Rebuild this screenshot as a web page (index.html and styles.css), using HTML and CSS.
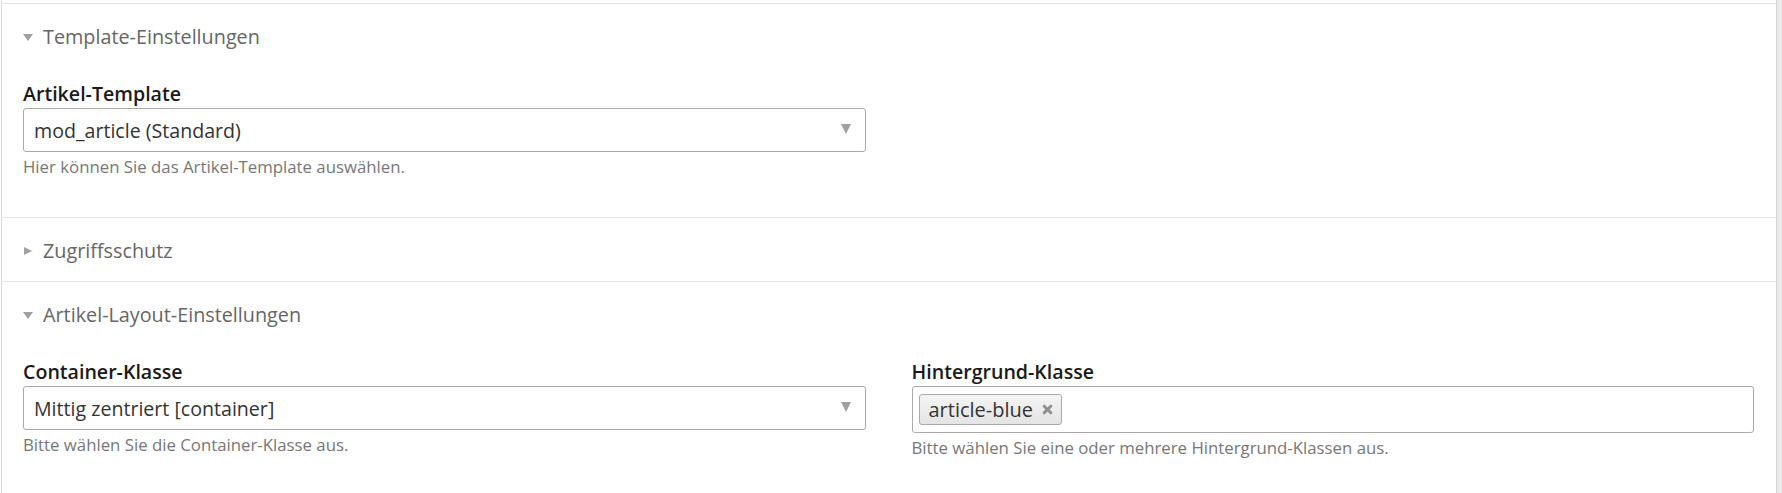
FILE: index.html
```html
<!DOCTYPE html>
<html lang="de">
<head>
<meta charset="utf-8">
<title>Artikel</title>
<link rel="stylesheet" href="styles.css">
</head>
<body>
<div class="page">
  <div class="panel">
    <section class="group open">
      <h3 class="legend"><span class="tri tri-down"></span>Template-Einstellungen</h3>
      <div class="fields">
        <div class="widget">
          <label class="label">Artikel-Template</label>
          <div class="select">
            <span class="value">mod_article (Standard)</span>
            <svg class="arrow" width="10" height="10" viewBox="0 0 10 10"><path d="M0 0H10L5 10Z" fill="#a0a0a0"/></svg>
          </div>
          <p class="help">Hier können Sie das Artikel-Template auswählen.</p>
        </div>
      </div>
    </section>
    <section class="group collapsed">
      <h3 class="legend"><span class="tri tri-right"></span>Zugriffsschutz</h3>
    </section>
    <section class="group open">
      <h3 class="legend"><span class="tri tri-down"></span>Artikel-Layout-Einstellungen</h3>
      <div class="fields">
        <div class="widget">
          <label class="label">Container-Klasse</label>
          <div class="select">
            <span class="value">Mittig zentriert [container]</span>
            <svg class="arrow" width="10" height="10" viewBox="0 0 10 10"><path d="M0 0H10L5 10Z" fill="#a0a0a0"/></svg>
          </div>
          <p class="help">Bitte wählen Sie die Container-Klasse aus.</p>
        </div>
        <div class="widget">
          <label class="label">Hintergrund-Klasse</label>
          <div class="select multi">
            <span class="chip">article-blue<svg class="chip-x" width="11" height="11" viewBox="0 0 11 11"><path d="M2.2 2.2L8.8 8.8M8.8 2.2L2.2 8.8" stroke="#8f8f8f" stroke-width="3" stroke-linecap="round"/></svg></span>
          </div>
          <p class="help">Bitte wählen Sie eine oder mehrere Hintergrund-Klassen aus.</p>
        </div>
      </div>
    </section>
  </div>
  <div class="scroll"></div>
</div>
</body>
</html>
```

FILE: styles.css
```css
* { box-sizing: border-box; }
html, body { margin: 0; padding: 0; background: #fff; }
body {
  font-family: "Open Sans", "Noto Sans", sans-serif;
  color: #222;
  overflow: hidden;
}
.page {
  display: flex;
  height: 493px;
  padding-left: 1px;
}
.panel {
  flex: 1;
  border-left: 1px solid #dcdcdc;
  border-right: 1px solid #d4d4d4;
  padding-top: 3px;
}
.scroll {
  width: 5px;
  background: #ebebeb;
}
.group {
  border-top: 1px solid #e6e6e6;
  padding: 0 22px 0 21px;
}
.group.open { padding-bottom: 40px; }
.legend {
  margin: 0;
  padding: 21px 0 18px;
  font-size: 19.8px;
  font-weight: 400;
  line-height: 24px;
  color: #666;
  display: flex;
  align-items: center;
}
.tri {
  display: inline-block;
  width: 0;
  height: 0;
  margin-right: 10px;
}
.tri-down {
  border-left: 5px solid transparent;
  border-right: 5px solid transparent;
  border-top: 7px solid #a0a0a0;
  margin-top: 1px;
}
.tri-right {
  border-top: 4.5px solid transparent;
  border-bottom: 4.5px solid transparent;
  border-left: 8px solid #a0a0a0;
  margin-left: 1px;
  margin-right: 11px;
}
.fields {
  display: grid;
  grid-template-columns: 1fr 1fr;
  column-gap: 46px;
  padding-top: 16px;
}
.label {
  display: block;
  font-size: 19.6px;
  font-weight: 600;
  line-height: 22px;
  color: #1a1a1a;
  margin-bottom: 3px;
}
.select {
  height: 44px;
  border: 1px solid #aaa;
  border-radius: 3px;
  display: flex;
  align-items: center;
  justify-content: space-between;
  padding: 0 14px 0 10px;
  background: #fff;
}
.select.multi {
  height: 47px;
  padding: 0 6px;
  justify-content: flex-start;
}
.value {
  font-size: 19.6px;
  color: #333;
}
.arrow { display: block; margin-top: -2px; }
.chip {
  display: inline-flex;
  align-items: center;
  height: 31px;
  padding: 0 8px 0 9px;
  border: 1px solid #aaa;
  border-radius: 3px;
  background: linear-gradient(#f4f4f4, #e4e4e4);
  font-size: 20px;
  color: #333;
}
.chip-x { margin-left: 9px; }
.help {
  margin: 5px 0 0;
  font-size: 16.8px;
  line-height: 20px;
  color: #777;
}
```
